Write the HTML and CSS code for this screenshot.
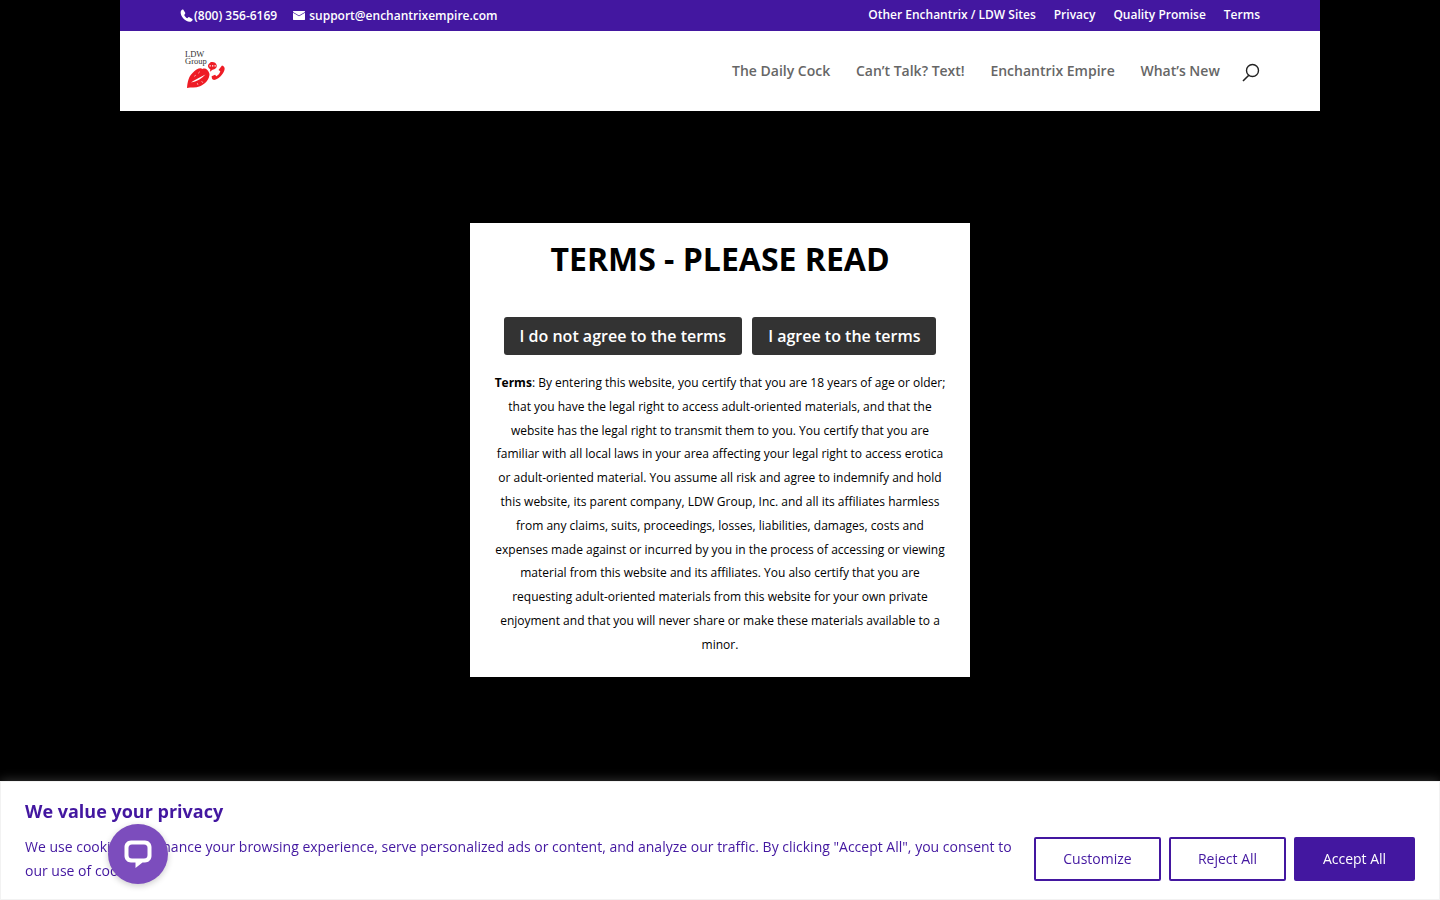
FILE: index.html
```html
<!DOCTYPE html>
<html>
<head>
    <title>Terms - Please Read</title>
    <link rel="stylesheet" href="styles.css">
</head>
<body>
    <div class="page">
        <div class="top-bar">
            <div class="top-contact">
                <a class="phone" href="#">
                    <svg class="top-icon" width="13" height="13" viewBox="0 0 24 24"><path fill="#fff" d="M6.200 1.200 9.600 7c.3.6.2 1.200-.2 1.700L7.800 10.900c1 2.500 3 4.700 5.600 6l2.100-1.700c.5-.4 1.100-.4 1.700-.1l5.600 3.500c.6.400.8 1.100.5 1.700-1 2-3 3.500-5.300 3.400C9.500 23.200.9 13.500 1.200 5.900c.1-2 1.200-3.800 3.200-5 .6-.3 1.400-.2 1.800.3z"/></svg>
                    (800) 356-6169
                </a>
                <a class="email" href="#">
                    <svg class="top-icon" width="12" height="9" viewBox="0 0 12 9"><path fill="#fff" d="M.5 0h11c.3 0 .5.200.5.500v.4L6 4.400 0 .9V.5C0 .2.200 0 .5 0zM0 1.700l6 3.500 6-3.500v6.800c0 .3-.2.500-.5.500H.5C.2 9 0 8.800 0 8.500z"/></svg>
                    support@enchantrixempire.com
                </a>
            </div>
            <div class="top-links">
                <a href="#">Other Enchantrix / LDW Sites</a>
                <a href="#">Privacy</a>
                <a href="#">Quality Promise</a>
                <a href="#">Terms</a>
            </div>
        </div>

        <header class="main-header">
            <a class="logo" href="#">
                <span class="logo-text">LDW<br>Group</span>
                <svg class="logo-art" width="42" height="28" viewBox="0 0 42 28">
                    <path fill="#ee1c25" d="M2 27C2.500 21.500 3.500 15.500 7.500 12 11 8.500 15 6 17.500 8c2.500-1.500 6 .5 7 5 0 5-4 10-9.500 12.200-4.500 1.800-9 .8-13 1.800z"/>
                    <path fill="#fff" d="M6 21.500C10 19 14 16.500 20.500 13.500 17 17.500 11.500 20.500 6 21.500z"/>
                    <path fill="none" stroke="#fff" stroke-width=".5" d="M9 15.500l2-1.500M13.500 12.500l1-2M18 22l-1.500-2M13 24l-.8-2"/>
                    <path fill="#ee1c25" d="M25.500 1.200c2.800-.8 5.800.5 6.200 3 .4 2.400-1.500 4.200-4.200 4.500L25 10.700l.3-2.500C23.600 7.400 22.800 5.900 23 4.500c.2-1.200 1.100-2 2.500-3.300z"/>
                    <path fill="#fff" d="M24.500 4.300h1.300v1.200h-1.300zM27 4.300h1.300v1.200H27zM29.500 4.300h1.300v1.200h-1.300z"/>
                    <path fill="#ee1c25" d="M37 4.500c1.800.5 3 2 2.600 3.800-.6 3.700-4.500 9-9.500 10.500-1.500.4-2.800-.3-3.200-1.500l-.3-2 3.500-1.500 1.200 1.500c2-1 3.500-3 4-5l-1.800-1.300z"/>
                </svg>
            </a>
            <nav class="main-nav">
                <a href="#">The Daily Cock</a>
                <a href="#">Can’t Talk? Text!</a>
                <a href="#">Enchantrix Empire</a>
                <a href="#">What’s New</a>
                <svg class="search-icon" width="18" height="19" viewBox="0 0 18 19"><circle cx="10.500" cy="7.500" r="6" fill="none" stroke="#222" stroke-width="1.400"/><path d="M6.800 12.200 1 18" fill="none" stroke="#222" stroke-width="1.600"/></svg>
            </nav>
        </header>

        <main class="content">
            <div class="terms-box">
                <h1>TERMS - PLEASE READ</h1>
                <div class="terms-buttons">
                    <a class="terms-btn btn-no" href="#">I do not agree to the terms</a>
                    <a class="terms-btn btn-yes" href="#">I agree to the terms</a>
                </div>
                <p><strong>Terms</strong>: By entering this website, you certify that you are 18 years of age or older; that you have the legal right to access adult-oriented materials, and that the website has the legal right to transmit them to you. You certify that you are familiar with all local laws in your area affecting your legal right to access erotica or adult-oriented material. You assume all risk and agree to indemnify and hold this website, its parent company, LDW Group, Inc. and all its affiliates harmless from any claims, suits, proceedings, losses, liabilities, damages, costs and expenses made against or incurred by you in the process of accessing or viewing material from this website and its affiliates. You also certify that you are requesting adult-oriented materials from this website for your own private enjoyment and that you will never share or make these materials available to a minor.</p>
            </div>
        </main>
    </div>

    <div class="cookie-banner">
        <div class="cookie-text">
            <h2>We value your privacy</h2>
            <p>We use cookies to enhance your browsing experience, serve personalized ads or content, and analyze our traffic. By clicking "Accept All", you consent to our use of cookies.</p>
        </div>
        <div class="cookie-buttons">
            <button class="cookie-btn btn-customize">Customize</button>
            <button class="cookie-btn btn-reject">Reject All</button>
            <button class="cookie-btn btn-accept">Accept All</button>
        </div>
    </div>

    <div class="chat-bubble">
        <svg width="30" height="30" viewBox="0 0 30 30"><path fill="#fff" d="M8 1.500h14c3.600 0 6.500 2.900 6.500 6.500v9c0 3.600-2.900 6.500-6.500 6.500h-2.500L12.500 29v-5.500H8c-3.600 0-6.500-2.900-6.500-6.500V8c0-3.600 2.900-6.500 6.500-6.500z"/><rect x="5.500" y="5.500" width="19" height="14" rx="3.500" fill="#7c4dbd"/></svg>
    </div>
</body>
</html>
```

FILE: styles.css
```css
* { box-sizing: border-box; }
html, body { height: 100%; }
body {
    margin: 0;
    background-color: #000;
    font-family: "Open Sans", Arial, sans-serif;
    font-size: 14px;
    overflow: hidden;
}
a { text-decoration: none; color: inherit; }

.page { width: 1200px; margin: 0 auto; }

.top-bar {
    display: flex;
    justify-content: space-between;
    align-items: center;
    height: 31px;
    padding: 0 60px;
    background-color: #4317a0;
    color: #fff;
    font-size: 12px;
    font-weight: 600;
}
.top-contact { display: flex; gap: 16px; }
.top-contact a { display: flex; align-items: center; gap: 1px; }
.top-contact .email { gap: 4px; }
.top-links { display: flex; gap: 18px; padding-bottom: 2px; }

.main-header {
    display: flex;
    justify-content: space-between;
    align-items: center;
    height: 80px;
    padding: 0 60px 0 65px;
    background-color: #fff;
}
.logo { display: block; width: 42px; margin-top: -2px; }
.logo-text {
    display: block;
    font-family: "Liberation Serif", serif;
    font-size: 8.500px;
    line-height: 6.500px;
    color: #333;
}
.logo-art { display: block; margin-top: -3px; }

.main-nav { display: flex; align-items: center; gap: 25.700px; }
.main-nav a {
    padding-bottom: 2px;
    color: #666;
    font-size: 14px;
    font-weight: 600;
}
.search-icon { margin-left: -3.500px; margin-top: 2px; }

.content { display: flex; justify-content: center; padding-top: 112px; }
.terms-box {
    width: 500px;
    height: 454px;
    padding: 16px 20px 0;
    background-color: #fff;
    color: #000;
    text-align: center;
}
.terms-box h1 {
    margin: 0 0 38px;
    font-size: 32px;
    font-weight: 700;
    line-height: 40px;
}
.terms-buttons { display: flex; justify-content: center; gap: 10px; margin-bottom: 16px; }
.terms-btn {
    display: block;
    height: 38px;
    padding: 0 16px;
    border-radius: 3px;
    background-color: #333;
    color: #fff;
    font-size: 16px;
    font-weight: 600;
    line-height: 38px;
}
.terms-box p {
    margin: 0;
    font-size: 12px;
    line-height: 23.800px;
}

.cookie-banner {
    position: fixed;
    left: 0;
    right: 0;
    bottom: 0;
    display: flex;
    justify-content: space-between;
    align-items: flex-start;
    height: 119px;
    padding: 17px 24px 18px;
    background-color: #fff;
    border: 1px solid #f2f2f2;
    box-shadow: 0 -1px 10px 0 rgba(172, 171, 171, 0.3);
    color: #4317a0;
}
.cookie-text { width: 990px; }
.cookie-text h2 { margin: 0 0 12px; font-size: 18px; font-weight: 700; line-height: 24px; }
.cookie-text p { margin: 0; font-size: 14px; line-height: 24px; }
.cookie-buttons { display: flex; gap: 8px; align-self: flex-end; }
.cookie-btn {
    height: 44px;
    padding: 0 0 2px;
    border: 2px solid #4317a0;
    border-radius: 2px;
    background-color: #fff;
    color: #4317a0;
    font-family: inherit;
    font-size: 14px;
}
.btn-customize { width: 127px; }
.btn-reject { width: 117px; }
.btn-accept { width: 121px; background-color: #4317a0; color: #fff; }

.chat-bubble {
    position: fixed;
    left: 108px;
    bottom: 16px;
    display: flex;
    justify-content: center;
    align-items: center;
    width: 60px;
    height: 60px;
    border-radius: 50%;
    background-color: #7c4dbd;
    box-shadow: 0 2px 6px rgba(0, 0, 0, 0.2);
}
```
